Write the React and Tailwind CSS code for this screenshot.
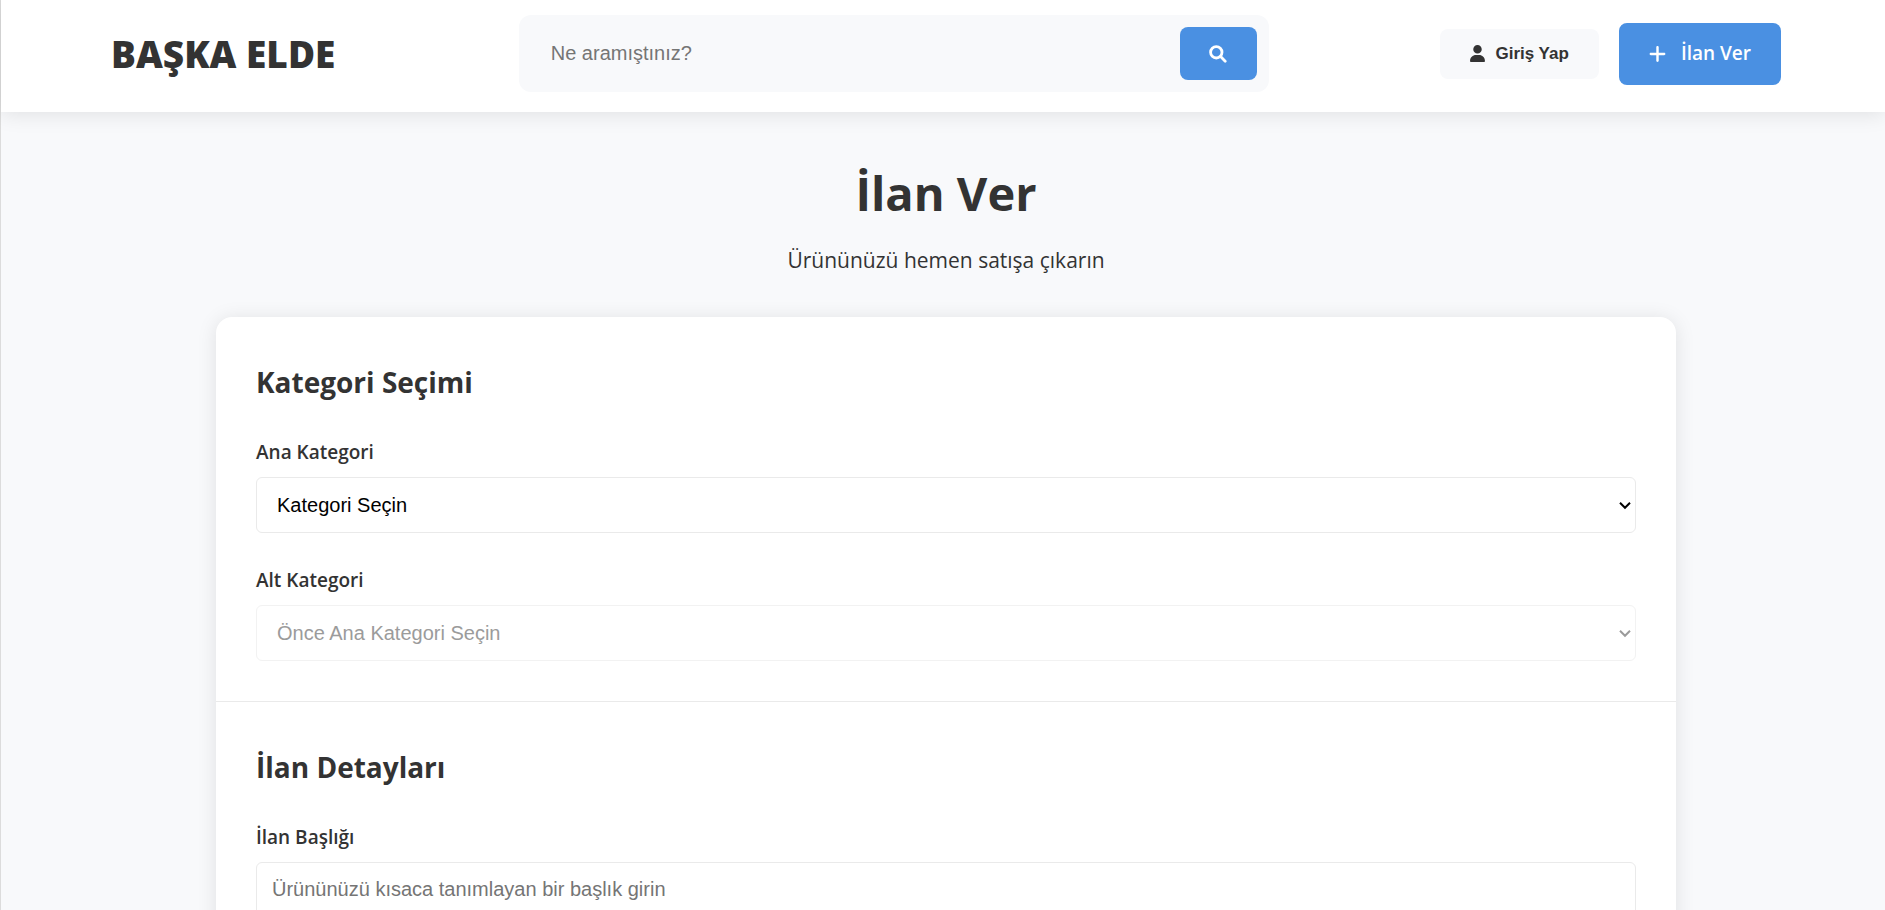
import { useState } from 'react';
import { FaUser, FaPlus } from 'react-icons/fa6';

const CONTROL = "block w-full border border-[#eaeaea] rounded-md bg-white text-xl font-['Liberation_Sans',Arial,sans-serif]";

const categories = {
  Elektronik: ['Telefon', 'Bilgisayar', 'Televizyon'],
  'Ev ve Yaşam': ['Mobilya', 'Dekorasyon', 'Mutfak'],
  Giyim: ['Kadın', 'Erkek', 'Çocuk']
};

function SearchIcon() {
  return (
    <svg width="18" height="18" viewBox="0 0 18 18" fill="none" stroke="currentColor" strokeWidth="2.8" strokeLinecap="round" aria-hidden="true">
      <circle cx="7.3" cy="7.3" r="5.7" />
      <path d="M11.6 11.6 16.2 16.2" />
    </svg>
  );
}

function Header() {
  return (
    <header className="relative bg-white pl-[6px] shadow-[0_2px_20px_rgba(0,0,0,0.1)]">
      <div className="w-full max-w-[1670px] h-28 mx-auto pb-[5px] flex items-center justify-between">
        <a href="#" className="min-w-[236px] font-['Noto_Sans','Open_Sans',sans-serif] text-[37px] leading-[56px] font-black whitespace-nowrap">BAŞKA ELDE</a>

        <form
          className="w-full max-w-[750px] flex items-center gap-3 p-3 bg-[#f8f9fb] rounded-xl"
          onSubmit={(e) => e.preventDefault()}
        >
          <input
            type="text"
            aria-label="Ne aramıştınız?"
            placeholder="Ne aramıştınız?"
            className="flex-1 min-w-0 h-[53px] px-5 bg-transparent outline-none text-xl font-['Liberation_Sans',Arial,sans-serif] placeholder:text-[#757575]"
          />
          <button type="submit" aria-label="Ara" className="w-[77px] h-[53px] flex items-center justify-center rounded-lg bg-[#4a90e2] text-white">
            <SearchIcon />
          </button>
        </form>

        <div className="flex items-center gap-5">
          <button type="button" className="h-[50px] px-[30px] flex items-center gap-[10px] rounded-lg bg-[#f8f9fb] font-['Liberation_Sans',Arial,sans-serif] text-[17px] font-bold whitespace-nowrap">
            <FaUser className="w-[15px] h-[17px]" />
            Giriş Yap
          </button>
          <a href="#" className="h-[62px] px-[30px] flex items-center gap-[15px] rounded-lg bg-[#4a90e2] text-white text-[19px] font-semibold whitespace-nowrap">
            <FaPlus className="w-[17px] h-5" />
            İlan Ver
          </a>
        </div>
      </div>
    </header>
  );
}

function Section({ title, children }) {
  return (
    <section className="p-10 border-b border-[#eaeaea]">
      <h2 className="mb-7 text-[28px] leading-[50px] font-bold">{title}</h2>
      <div className="flex flex-col gap-[30px]">{children}</div>
    </section>
  );
}

function Field({ id, label, children }) {
  return (
    <div>
      <label htmlFor={id} className="block mb-2 text-[19px] leading-[34px] font-semibold">{label}</label>
      {children}
    </div>
  );
}

function Select({ id, placeholder, options, ...props }) {
  return (
    <div className="relative">
      <select
        id={id}
        className={`peer ${CONTROL} h-14 appearance-none px-5 text-black disabled:border-[#f2f2f2] disabled:text-[#9b9b9b] disabled:opacity-100`}
        {...props}
      >
        <option value="">{placeholder}</option>
        {options.map((name) => (
          <option key={name} value={name}>{name}</option>
        ))}
      </select>
      <svg
        className="absolute right-[5px] top-6 text-black peer-disabled:text-[#9b9b9b] pointer-events-none"
        width="12"
        height="9"
        viewBox="0 0 12 9"
        fill="none"
        stroke="currentColor"
        strokeWidth="2"
        aria-hidden="true"
      >
        <path d="M1 1.8 6 6.8 11 1.8" />
      </svg>
    </div>
  );
}

export default function App() {
  const [category, setCategory] = useState('');

  return (
    <div className="min-h-screen border-l border-[#dcdcdc] bg-[#f8f9fb] text-[#333] font-['Open_Sans','Noto_Sans',sans-serif]">
      <Header />

      <main className="pl-[6px] pt-10">
        <div className="mb-[38px] text-center">
          <h1 className="text-[47px] leading-[82px] font-bold">İlan Ver</h1>
          <p className="mt-2 text-[21px] leading-[37px]">Ürününüzü hemen satışa çıkarın</p>
        </div>

        <form className="w-full max-w-[1460px] mx-auto bg-white rounded-2xl shadow-[0_2px_20px_rgba(0,0,0,0.1)]">
          <Section title="Kategori Seçimi">
            <Field id="category" label="Ana Kategori">
              <Select
                id="category"
                placeholder="Kategori Seçin"
                options={Object.keys(categories)}
                value={category}
                onChange={(e) => setCategory(e.target.value)}
              />
            </Field>
            <Field id="subcategory" label="Alt Kategori">
              <Select
                id="subcategory"
                placeholder="Önce Ana Kategori Seçin"
                options={categories[category] || []}
                disabled={!category}
              />
            </Field>
          </Section>

          <Section title="İlan Detayları">
            <Field id="title" label="İlan Başlığı">
              <input
                id="title"
                type="text"
                placeholder="Ürününüzü kısaca tanımlayan bir başlık girin"
                className={`${CONTROL} h-[54px] px-[15px] placeholder:text-[#757575]`}
              />
            </Field>
          </Section>
        </form>
      </main>
    </div>
  );
}
